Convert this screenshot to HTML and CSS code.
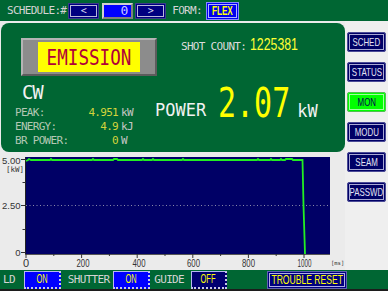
FILE: index.html
```html
<!DOCTYPE html>
<html lang="en">
  <head>
    <meta charset="UTF-8" />
    <title>Laser Monitor</title>
    <link rel="stylesheet" href="styles.css">
  </head>
  <body>
    <div class="screen">
      <header class="topbar">
        <span class="label">SCHEDULE:#</span>
        <span class="nav-btn">&lt;</span>
        <span class="field">0</span>
        <span class="nav-btn">&gt;</span>
        <span class="label label-form">FORM:</span>
        <span class="flex-btn"><span class="cond">FLEX</span></span>
      </header>

      <div class="main">
        <div class="content">
          <section class="panel">
            <div class="panel-top">
              <div class="emission-frame">
                <div class="emission"><span>EMISSION</span></div>
              </div>
              <div class="shot">
                <span>SHOT COUNT:</span>
                <span class="shot-num">1225381</span>
              </div>
            </div>
            <div class="panel-bottom">
              <div class="readout">
                <div class="mode">CW</div>
                <div class="stats">
                  <span class="stat-label">PEAK:</span><span class="stat-val">4.951</span><span class="stat-unit">kW</span>
                  <span class="stat-label">ENERGY:</span><span class="stat-val">4.9</span><span class="stat-unit">kJ</span>
                  <span class="stat-label">BR POWER:</span><span class="stat-val">0</span><span class="stat-unit">W</span>
                </div>
              </div>
              <div class="power">
                <span class="power-label">POWER</span>
                <span class="power-val"><span>2.07</span></span>
                <span class="power-unit">kW</span>
              </div>
            </div>
          </section>

          <!-- waveform: viewBox uses page coordinates -->
          <svg class="chart" width="345" height="118" viewBox="0 152 345 118">
            <rect x="25.5" y="157" width="304.5" height="97" fill="#000066"/>
            <line x1="25.5" y1="157" x2="25.5" y2="254.5" stroke="#222" stroke-width="1"/>
            <line x1="25.5" y1="254.5" x2="330" y2="254.5" stroke="#555" stroke-width="1"/>
            <g stroke="#333" stroke-width="1">
              <line x1="21" y1="159.5" x2="25.5" y2="159.5"/>
              <line x1="22.5" y1="182.5" x2="25.5" y2="182.5"/>
              <line x1="21" y1="205.5" x2="25.5" y2="205.5"/>
              <line x1="22.5" y1="229.5" x2="25.5" y2="229.5"/>
              <line x1="21" y1="252.5" x2="25.5" y2="252.5"/>
              <line x1="26" y1="254" x2="26" y2="258"/>
              <line x1="53.8" y1="254" x2="53.8" y2="256"/>
              <line x1="81.6" y1="254" x2="81.6" y2="258"/>
              <line x1="109.4" y1="254" x2="109.4" y2="256"/>
              <line x1="137.2" y1="254" x2="137.2" y2="258"/>
              <line x1="165" y1="254" x2="165" y2="256"/>
              <line x1="192.8" y1="254" x2="192.8" y2="258"/>
              <line x1="220.6" y1="254" x2="220.6" y2="256"/>
              <line x1="248.4" y1="254" x2="248.4" y2="258"/>
              <line x1="276.2" y1="254" x2="276.2" y2="256"/>
              <line x1="304" y1="254" x2="304" y2="258"/>
            </g>
            <line x1="26" y1="205.5" x2="330" y2="205.5" stroke="#8a8aaa" stroke-width="1" stroke-dasharray="1 2.5"/>
            <polyline fill="none" stroke="#22ee22" stroke-width="1.8"
              points="26,161 28,160 29,159 31,160 50,160 51,159 52,160 92,160 93,159 94,160 113,160 114,159 117,159 118,160 142,160 143,159 144,160 152,160 153,159 154,160 182,160 183,159 184,160 257,160 258,159 259,160 270,160 271,159 272,160 280,160 281,159 282,160 285,160 286,159 292,159 293,160 302.5,160 303.5,205 305,254"/>
            <g class="axis-text">
              <text x="20.5" y="163.5" text-anchor="end">5.00</text>
              <text x="6" y="172" class="unit-text">[kW]</text>
              <text x="20.5" y="208.5" text-anchor="end">2.50</text>
              <text x="20.5" y="255.5" text-anchor="end">0</text>
              <text x="26" y="266.5" text-anchor="middle" class="x-label">0</text>
              <text x="83" y="266.5" text-anchor="middle" class="x-label" textLength="13" lengthAdjust="spacingAndGlyphs">200</text>
              <text x="139" y="266.5" text-anchor="middle" class="x-label" textLength="13" lengthAdjust="spacingAndGlyphs">400</text>
              <text x="193.5" y="266.5" text-anchor="middle" class="x-label" textLength="13" lengthAdjust="spacingAndGlyphs">600</text>
              <text x="248.5" y="266.5" text-anchor="middle" class="x-label" textLength="13" lengthAdjust="spacingAndGlyphs">800</text>
              <text x="304.5" y="266.5" text-anchor="middle" class="x-label" textLength="14" lengthAdjust="spacingAndGlyphs">1000</text>
              <text x="331" y="265" class="unit-text ms">[ms]</text>
            </g>
          </svg>
        </div>

        <nav class="side">
          <span class="side-btn"><span class="cond">SCHED</span></span>
          <span class="side-btn"><span class="cond">STATUS</span></span>
          <span class="side-btn active"><span class="cond">MON</span></span>
          <span class="side-btn"><span class="cond">MODU</span></span>
          <span class="side-btn"><span class="cond">SEAM</span></span>
          <span class="side-btn"><span class="cond">PASSWD</span></span>
        </nav>
      </div>

      <footer class="bottombar">
        <span class="label">LD</span>
        <span class="toggle toggle-ld"><span class="cond">ON</span></span>
        <span class="label label-shutter">SHUTTER</span>
        <span class="toggle toggle-shutter"><span class="cond">ON</span></span>
        <span class="label label-guide">GUIDE</span>
        <span class="toggle toggle-off"><span class="cond">OFF</span></span>
        <span class="reset"><span class="cond">TROUBLE RESET</span></span>
      </footer>
    </div>
  </body>
</html>
```

FILE: styles.css
```css
* {
  margin: 0;
  padding: 0;
  box-sizing: border-box;
}

:root {
  --panel-green: #006633;
  --navy: #000066;
  --label: #d4d4d4;
  --yellow: #ffff00;
}

body {
  font-family: 'DejaVu Sans Mono', monospace;
  font-size: 11px;
  letter-spacing: -0.7px;
  background: #1c1c1c;
}

.screen {
  width: 388px;
  height: 291px;
  display: flex;
  flex-direction: column;
  background: #ebebeb;
  border-bottom: 2px solid #1c1c1c;
  overflow: hidden;
}

/* condensed text used on the buttons */
.cond {
  display: inline-block;
  font-family: 'Liberation Sans', sans-serif;
  font-size: 11px;
  letter-spacing: 0;
  transform: scaleX(0.72);
  white-space: nowrap;
}

/* Top bar */
.topbar {
  height: 21px;
  flex: none;
  display: flex;
  align-items: center;
  padding-left: 7px;
  background: var(--panel-green);
  color: var(--label);
}

.nav-btn {
  width: 31px;
  height: 16px;
  margin-left: 2px;
  display: flex;
  align-items: center;
  justify-content: center;
  background: #000080;
  border: 1px solid #3a3a8a;
  box-shadow: inset 0 0 0 1px #000080, inset 0 0 0 2px #b8b8d8;
  color: #d8d8f0;
  font-size: 10px;
  letter-spacing: 0;
}

.field {
  width: 31px;
  height: 16px;
  margin-left: 3px;
  background: #0000ff;
  border: 2px solid;
  border-color: #d0d0d0 #808080 #808080 #d0d0d0;
  color: #c8c8ff;
  font-size: 13px;
  line-height: 12px;
  letter-spacing: 0;
  text-align: right;
  padding-right: 3px;
}

.field + .nav-btn {
  margin-left: 2px;
}

.label-form {
  margin-left: 6px;
}

.flex-btn {
  width: 33px;
  height: 18px;
  margin-left: 4px;
  display: flex;
  align-items: center;
  justify-content: center;
  background: #0000ee;
  border: 1px solid #8888ff;
  box-shadow: inset 0 0 0 1px #0000ee, inset 0 0 0 2px #b0b0ff;
  color: var(--yellow);
}

.flex-btn .cond {
  font-size: 12px;
  font-weight: bold;
  transform: scaleX(0.68);
}

/* Main area */
.main {
  flex: 1;
  display: flex;
}

.content {
  width: 345px;
  flex: none;
  display: flex;
  flex-direction: column;
}

.panel {
  width: 344px;
  height: 129px;
  flex: none;
  margin: 2px 0 0 1px;
  background: var(--panel-green);
  border-radius: 8px;
  color: #f2f2f2;
}

.panel-top {
  display: flex;
  padding-top: 15px;
}

.emission-frame {
  width: 136px;
  height: 38px;
  margin-left: 20px;
  padding: 2px 0 0 15px;
  background: #8c8c8c;
  border: 2px solid;
  border-color: #b4b4b4 #5c5c5c #5c5c5c #b4b4b4;
}

.emission {
  width: 102px;
  height: 30px;
  display: flex;
  align-items: center;
  justify-content: center;
  background: #ffff00;
  color: #b0003a;
}

.emission span {
  display: inline-block;
  font-size: 22px;
  letter-spacing: 0;
  transform: scaleX(0.8);
}

.shot {
  margin-left: 24px;
  display: flex;
  align-items: baseline;
  line-height: 14px;
  color: #dcdcdc;
}

.shot-num {
  display: inline-block;
  margin-left: 4px;
  font-family: 'Liberation Sans', sans-serif;
  font-size: 16px;
  letter-spacing: 0;
  color: #ffff33;
  transform: scaleX(0.77);
  transform-origin: left;
}

.panel-bottom {
  display: flex;
}

.readout {
  width: 154px;
  flex: none;
}

.mode {
  margin: 7px 0 0 21px;
  font-size: 19px;
  line-height: 18px;
  letter-spacing: -1.3px;
}

.stats {
  margin-top: 5px;
  padding-left: 14px;
  display: grid;
  grid-template-columns: 60px 43px auto;
  line-height: 14px;
}

.stat-label {
  color: #b4c8b4;
  white-space: nowrap;
}

.stat-val {
  text-align: right;
  color: #d4d43c;
}

.stat-unit {
  padding-left: 3px;
  color: #c8c8c8;
}

.power {
  margin-top: 7px;
  display: flex;
  align-items: baseline;
}

.power-label,
.power-unit {
  font-size: 17px;
  line-height: 20px;
  letter-spacing: 0;
}

.power-label {
  position: relative;
  top: -1px;
}

.power-val {
  width: 72px;
  flex: none;
  margin-left: 12px;
  font-size: 40px;
  line-height: 40px;
  letter-spacing: 0;
  color: var(--yellow);
}

.power-val span {
  display: inline-block;
  transform: scaleX(0.75);
  transform-origin: left;
}

.power-unit {
  margin-left: 7px;
}

/* Chart */
.chart {
  display: block;
  flex: none;
}

.axis-text text {
  font-family: 'Liberation Sans', sans-serif;
  font-size: 9.5px;
  letter-spacing: 0;
  fill: #333;
}

.axis-text .x-label {
  font-size: 11px;
}

.axis-text .unit-text {
  font-family: 'DejaVu Sans Mono', monospace;
  font-size: 7.5px;
}

.axis-text .ms {
  font-size: 5.5px;
}

/* Side menu */
.side {
  width: 43px;
  flex: none;
  display: flex;
  flex-direction: column;
  gap: 10px;
  padding: 11px 0 0 2px;
  background: #efefef;
}

.side-btn {
  width: 39px;
  height: 20px;
  display: flex;
  align-items: center;
  justify-content: center;
  background: var(--navy);
  border: 1px solid #4a4a96;
  border-radius: 2px;
  box-shadow: inset 0 0 0 1px var(--navy), inset 0 0 0 2px #a8a8d4;
  color: #e4e4f4;
}

.side-btn.active {
  background: #00ff00;
  border-color: #50c050;
  box-shadow: inset 0 0 0 1px #00ff00, inset 0 0 0 2px #a0ffa0;
  color: #000050;
}

/* Bottom bar */
.bottombar {
  height: 19px;
  flex: none;
  display: flex;
  align-items: center;
  padding-left: 3px;
  background: var(--panel-green);
  color: var(--label);
}

.toggle {
  width: 37px;
  height: 18px;
  display: flex;
  align-items: center;
  justify-content: center;
  background: #0000ff;
  border-style: solid dotted dotted solid;
  border-width: 1px 2px 2px 1px;
  border-color: #b8b8f0 #c8c8e8 #c8c8e8 #b8b8f0;
  color: var(--yellow);
}

.toggle .cond {
  font-size: 12px;
  transform: scaleX(0.62);
}

.toggle-ld {
  margin-left: 9px;
}

.label-shutter {
  margin-left: 7px;
}

.toggle-shutter {
  margin-left: 4px;
}

.label-guide {
  margin-left: 4px;
}

.toggle-off {
  width: 36px;
  margin-left: 7px;
  background: #000070;
}

.reset {
  width: 80px;
  height: 18px;
  margin-left: 40px;
  display: flex;
  align-items: center;
  justify-content: center;
  background: #000080;
  border: 1px solid #6060b0;
  box-shadow: inset 0 0 0 1px #000080, inset 0 0 0 2px #b0b0e0;
  color: var(--yellow);
}

.reset .cond {
  font-size: 13px;
  transform: scaleX(0.66);
}
```
